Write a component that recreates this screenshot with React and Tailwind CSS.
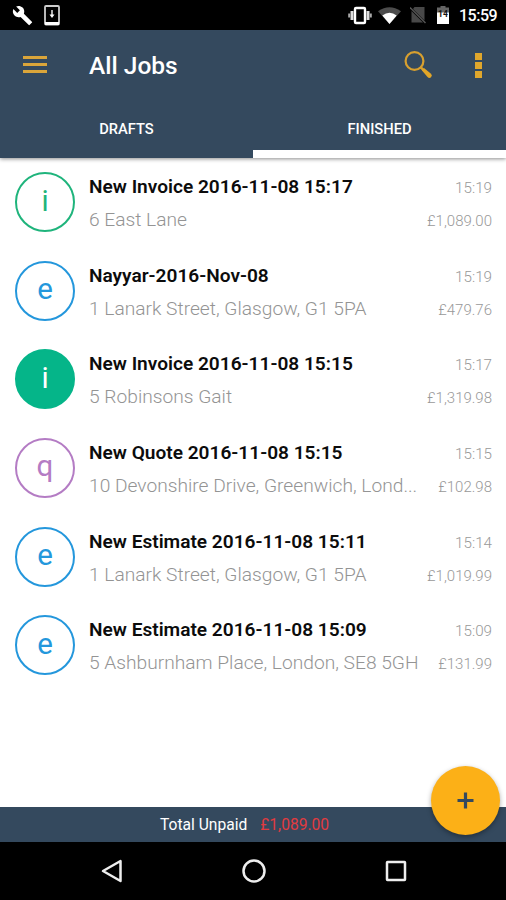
import clsx from 'clsx';

const jobs = [
  { type: 'invoice', title: 'New Invoice 2016-11-08 15:17', address: '6 East Lane', time: '15:19', amount: '£1,089.00' },
  { type: 'estimate', title: 'Nayyar-2016-Nov-08', address: '1 Lanark Street, Glasgow, G1 5PA', time: '15:19', amount: '£479.76' },
  { type: 'paid', title: 'New Invoice 2016-11-08 15:15', address: '5 Robinsons Gait', time: '15:17', amount: '£1,319.98' },
  { type: 'quote', title: 'New Quote 2016-11-08 15:15', address: '10 Devonshire Drive, Greenwich, Lond...', time: '15:15', amount: '£102.98' },
  { type: 'estimate', title: 'New Estimate 2016-11-08 15:11', address: '1 Lanark Street, Glasgow, G1 5PA', time: '15:14', amount: '£1,019.99' },
  { type: 'estimate', title: 'New Estimate 2016-11-08 15:09', address: '5 Ashburnham Place, London, SE8 5GH', time: '15:09', amount: '£131.99' },
];

const badges = {
  invoice: { letter: 'i', style: 'border-[#1fb47c] text-[#1fb47c]' },
  paid: { letter: 'i', style: 'border-[#05b589] bg-[#05b589] text-white' },
  estimate: { letter: 'e', style: 'border-[#2497dc] text-[#2497dc]' },
  quote: { letter: 'q', style: 'border-[#b47cc4] text-[#b47cc4]' },
};

function StatusBar() {
  return (
    <div className="h-[30px] shrink-0 bg-black flex items-center justify-between pl-3 pr-[9px]">
      <div className="flex items-center gap-3">
        <svg width="21" height="21" viewBox="0 0 24 24" fill="#fff">
          <path d="M22.7 19l-9.1-9.1c.9-2.3.4-5-1.5-6.9-2-2-5-2.4-7.4-1.3L9 6 6 9 1.6 4.7C.4 7.1.9 10.1 2.9 12.1c1.9 1.9 4.6 2.4 6.9 1.5l9.1 9.1c.4.4 1 .4 1.4 0l2.3-2.3c.5-.4.5-1.1.1-1.4z" />
        </svg>
        <svg className="-ml-px" width="16" height="21" viewBox="0 0 16 21" fill="none">
          <rect x="1" y="1" width="14" height="18.5" rx="1" stroke="#ccc" strokeWidth="1.8" />
          <path d="M1 17h14v3H1z" fill="#fff" />
          <path d="M8 5v5" stroke="#ddd" strokeWidth="1.6" />
          <path d="M5.5 9.5h5L8 13z" fill="#fff" />
        </svg>
      </div>
      <div className="flex items-center">
        <svg className="mr-[6px] mt-0.5" width="24" height="20" viewBox="0 0 24 20" fill="none">
          <rect x="7" y="2" width="10" height="15" rx="1" stroke="#fff" strokeWidth="2.4" />
          <path d="M4 5v9M20 5v9" stroke="#ddd" strokeWidth="3" />
          <path d="M1.2 7.5v4M22.8 7.5v4" stroke="#aaa" strokeWidth="2" />
        </svg>
        <svg className="mr-[9px] mt-0.5" width="23" height="18" viewBox="0 0 23 18">
          <path d="M0 4.2Q11.5 -3.8 23 4.2L11.5 17z" fill="#4c4c4c" />
          <path d="M4.3 8.5Q11.5 3 18.7 8.5L11.5 17z" fill="#fff" />
        </svg>
        <svg className="mr-[10px]" width="16" height="18" viewBox="0 0 16 18">
          <path d="M4.5 1H14.5V14.5L3 3z M1.5 5L13 16.5H1.5z" fill="#484848" />
          <path d="M0 1.5L15.5 17" stroke="#555" strokeWidth="1.5" />
        </svg>
        <svg className="mr-[9px]" width="14" height="20" viewBox="0 0 14 20">
          <path d="M4.5 1h5v1.5H13V8H1V2.5h3.5z" fill="#666" />
          <path d="M1 7.5h12V19H1z" fill="#fff" />
          <text x="7" y="12" textAnchor="middle" fontFamily="Roboto" fontSize="8.5" fontWeight="700" fill="#111">14</text>
        </svg>
        <span className="w-[38px] pt-0.5 text-[16px] leading-none font-medium tracking-[-0.5px] text-white">15:59</span>
      </div>
    </div>
  );
}

function Toolbar() {
  return (
    <div className="h-[70px] shrink-0 flex items-center pl-[23px] pr-[24px]">
      <div className="w-6 -mt-0.5 flex flex-col gap-1">
        <div className="h-[3px] bg-[#daa53a]" />
        <div className="h-[3px] bg-[#daa53a]" />
        <div className="h-[3px] bg-[#daa53a]" />
      </div>
      <h1 className="ml-[42px] pt-0.5 text-[24.5px] leading-none font-medium text-white">All Jobs</h1>
      <svg className="ml-auto -mt-px" width="29" height="29" viewBox="0 0 29 29" fill="none">
        <circle cx="10.5" cy="11" r="8.9" stroke="#d8a02f" strokeWidth="2.2" />
        <path d="M16.8 17.3l3 3" stroke="#d8a02f" strokeWidth="2.5" />
        <path d="M20 18L27 23.7Q28.8 25.6 27 27.3Q25.3 28.8 23.5 27L17.8 20.2z" fill="#e2a628" />
      </svg>
      <div className="ml-[42px] w-[7px] flex flex-col gap-0.5">
        <div className="size-[7px] bg-[#e0a72c]" />
        <div className="size-[7px] bg-[#e0a72c]" />
        <div className="size-[7px] bg-[#e0a72c]" />
      </div>
    </div>
  );
}

function JobRow({ job }) {
  const badge = badges[job.type];
  return (
    <li className="h-[88.6px] flex items-center pl-[15px] pr-[14px]">
      <div
        className={clsx(
          'size-[60px] shrink-0 rounded-full border-2 flex items-center justify-center text-[29.5px] leading-none pb-0.5',
          badge.style
        )}
      >
        {badge.letter}
      </div>
      <div className="ml-[14px] flex-1 min-w-0 pt-1">
        <div className="flex items-baseline justify-between leading-[31px]">
          <span className="text-[19.1px] font-semibold text-[#0c0c0c]">{job.title}</span>
          <span className="text-[15.2px] font-light text-[#999]">{job.time}</span>
        </div>
        <div className="flex items-baseline justify-between leading-[31px] whitespace-nowrap">
          <span className="text-[19.2px] font-light text-[#949494]">{job.address}</span>
          <span className="text-[15px] font-light text-[#999]">{job.amount}</span>
        </div>
      </div>
    </li>
  );
}

export default function App() {
  return (
    <div className="relative w-full h-[900px] flex flex-col overflow-hidden bg-white font-['Roboto',sans-serif]">
      <StatusBar />
      <header className="z-10 h-[128px] shrink-0 flex flex-col bg-[#34495e] shadow-[0_1px_4px_rgba(0,0,0,0.45)]">
        <Toolbar />
        <nav className="flex-1 grid grid-cols-2 text-[14.7px] font-medium text-white">
          <div className="flex items-center justify-center">DRAFTS</div>
          <div className="flex items-center justify-center border-b-8 border-white pt-2">FINISHED</div>
        </nav>
      </header>

      <ul className="flex-1">
        {jobs.map((job) => (
          <JobRow key={job.title} job={job} />
        ))}
      </ul>

      <footer className="h-[35px] shrink-0 bg-[#34495e] flex items-center pl-[160px] pt-[3px] text-[15.6px]">
        <span className="text-white">Total Unpaid</span>
        <span className="ml-[13px] text-[#e23b40]">£1,089.00</span>
      </footer>

      <div className="h-[58px] shrink-0 bg-black flex items-center justify-between pl-[100px] pr-[98px]">
        <svg width="24" height="26" viewBox="0 0 24 26" fill="none">
          <path d="M20.5 3v20L3 13z" stroke="#eee" strokeWidth="2.5" strokeLinejoin="round" />
        </svg>
        <svg width="26" height="26" viewBox="0 0 26 26" fill="none">
          <circle cx="13" cy="13" r="10.5" stroke="#eee" strokeWidth="2.5" />
        </svg>
        <svg width="24" height="24" viewBox="0 0 24 24" fill="none">
          <rect x="3" y="3" width="18" height="18" rx="0.5" stroke="#eee" strokeWidth="2.5" />
        </svg>
      </div>

      <button className="absolute z-20 right-[6px] bottom-[65px] size-[69px] rounded-full bg-[#fcb017] flex items-center justify-center shadow-[0_2px_5px_rgba(0,0,0,0.35)]">
        <svg width="17" height="17" viewBox="0 0 17 17">
          <path d="M8.5 0.5v16M0.5 8.5h16" stroke="#34495e" strokeWidth="3.2" />
        </svg>
      </button>
    </div>
  );
}
